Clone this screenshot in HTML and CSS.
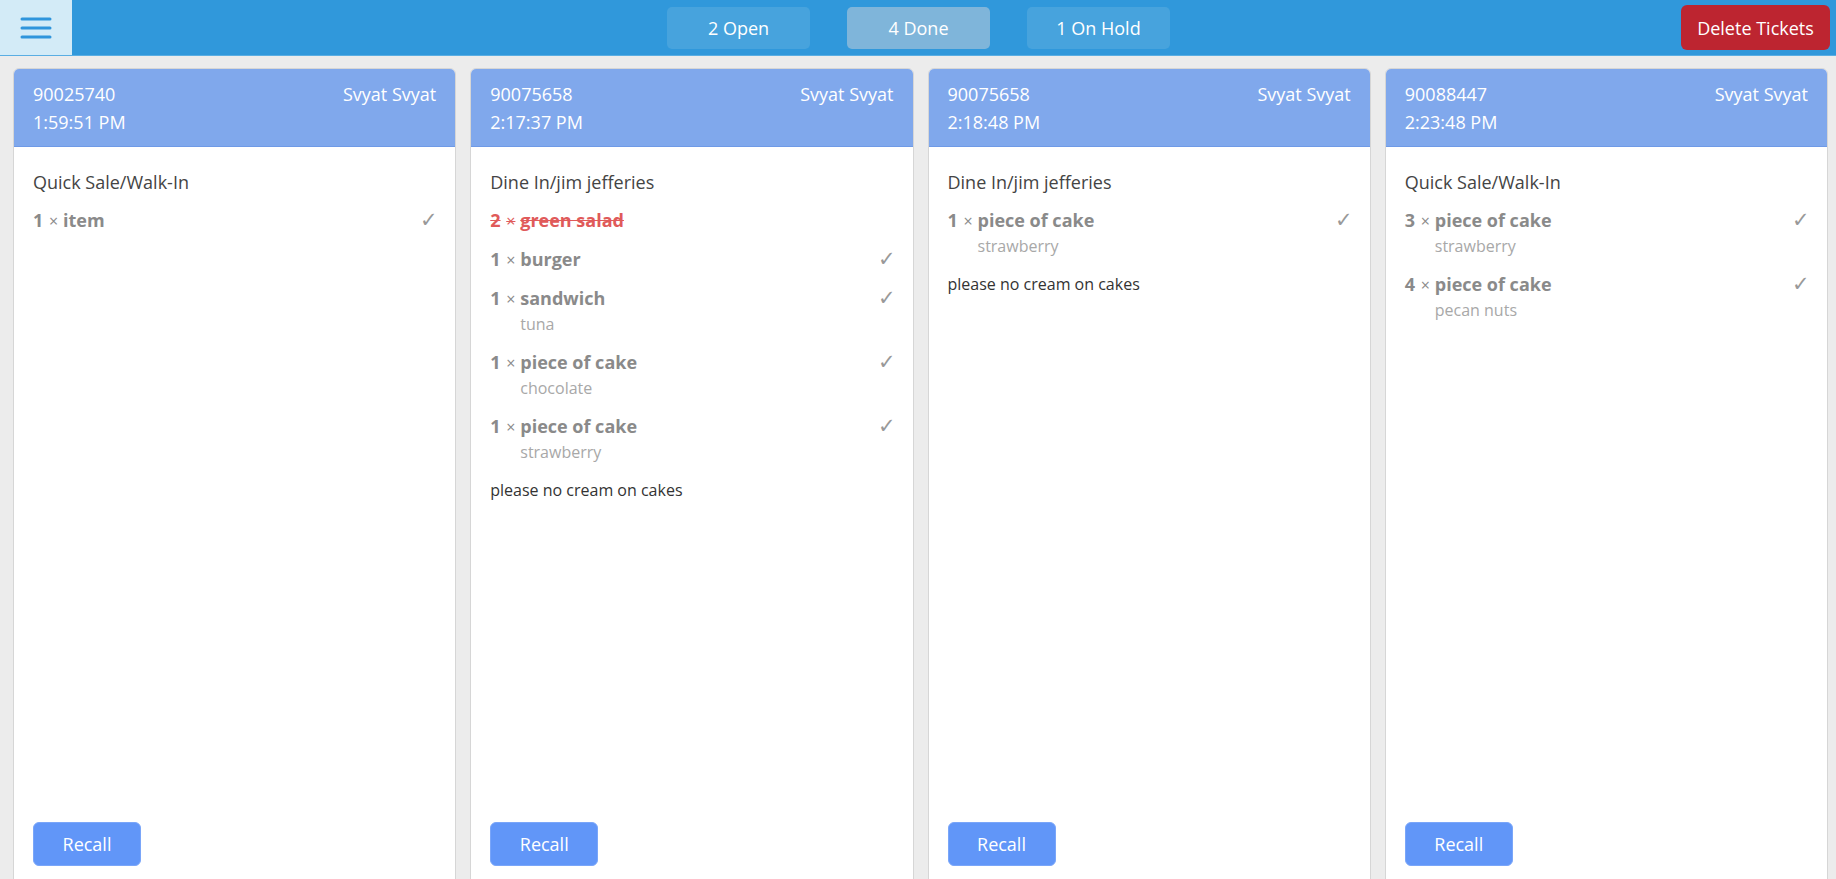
FILE: index.html
```html
<!DOCTYPE html>
<html lang="en">
<head>
    <meta charset="UTF-8">
    <meta name="viewport" content="width=device-width, initial-scale=1.0">
    <title>Kitchen Tickets</title>
    <link rel="stylesheet" href="styles.css">
</head>
<body>

<header class="topbar">
    <button class="menu-btn" aria-label="Menu">
        <svg width="32" height="24" viewBox="0 0 32 24">
            <path d="M2 3h28M2 12h28M2 21h28" stroke="#2f95dc" stroke-width="3" stroke-linecap="round"/>
        </svg>
    </button>
    <nav class="tabs">
        <button class="tab">2 Open</button>
        <button class="tab active">4 Done</button>
        <button class="tab">1 On Hold</button>
    </nav>
    <button class="delete-btn">Delete Tickets</button>
</header>

<section class="tickets">
    <div class="ticket">
        <div class="ticket-head">
            <div class="row"><span>90025740</span><span>Svyat Svyat</span></div>
            <div class="row"><span>1:59:51 PM</span></div>
        </div>
        <div class="ticket-body">
            <div class="order-type">Quick Sale/Walk-In</div>
            <div class="item">
                <div class="item-line"><span class="qty">1</span><span class="times">×</span><span class="name">item</span><span class="check">✓</span></div>
            </div>
        </div>
        <div class="ticket-foot"><button class="recall">Recall</button></div>
    </div>

    <div class="ticket">
        <div class="ticket-head">
            <div class="row"><span>90075658</span><span>Svyat Svyat</span></div>
            <div class="row"><span>2:17:37 PM</span></div>
        </div>
        <div class="ticket-body">
            <div class="order-type">Dine In/jim jefferies</div>
            <div class="item voided">
                <div class="item-line"><span class="qty">2</span><span class="times">×</span><span class="name">green salad</span></div>
            </div>
            <div class="item">
                <div class="item-line"><span class="qty">1</span><span class="times">×</span><span class="name">burger</span><span class="check">✓</span></div>
            </div>
            <div class="item">
                <div class="item-line"><span class="qty">1</span><span class="times">×</span><span class="name">sandwich</span><span class="check">✓</span></div>
                <div class="mod">tuna</div>
            </div>
            <div class="item">
                <div class="item-line"><span class="qty">1</span><span class="times">×</span><span class="name">piece of cake</span><span class="check">✓</span></div>
                <div class="mod">chocolate</div>
            </div>
            <div class="item">
                <div class="item-line"><span class="qty">1</span><span class="times">×</span><span class="name">piece of cake</span><span class="check">✓</span></div>
                <div class="mod">strawberry</div>
            </div>
            <div class="note">please no cream on cakes</div>
        </div>
        <div class="ticket-foot"><button class="recall">Recall</button></div>
    </div>

    <div class="ticket">
        <div class="ticket-head">
            <div class="row"><span>90075658</span><span>Svyat Svyat</span></div>
            <div class="row"><span>2:18:48 PM</span></div>
        </div>
        <div class="ticket-body">
            <div class="order-type">Dine In/jim jefferies</div>
            <div class="item">
                <div class="item-line"><span class="qty">1</span><span class="times">×</span><span class="name">piece of cake</span><span class="check">✓</span></div>
                <div class="mod">strawberry</div>
            </div>
            <div class="note">please no cream on cakes</div>
        </div>
        <div class="ticket-foot"><button class="recall">Recall</button></div>
    </div>

    <div class="ticket">
        <div class="ticket-head">
            <div class="row"><span>90088447</span><span>Svyat Svyat</span></div>
            <div class="row"><span>2:23:48 PM</span></div>
        </div>
        <div class="ticket-body">
            <div class="order-type">Quick Sale/Walk-In</div>
            <div class="item">
                <div class="item-line"><span class="qty">3</span><span class="times">×</span><span class="name">piece of cake</span><span class="check">✓</span></div>
                <div class="mod">strawberry</div>
            </div>
            <div class="item">
                <div class="item-line"><span class="qty">4</span><span class="times">×</span><span class="name">piece of cake</span><span class="check">✓</span></div>
                <div class="mod">pecan nuts</div>
            </div>
        </div>
        <div class="ticket-foot"><button class="recall">Recall</button></div>
    </div>
</section>

</body>
</html>
```

FILE: styles.css
```css
body {
    font-family: "Open Sans", "Noto Sans", sans-serif;
    margin: 0;
    padding: 0;
    background-color: #ececec;
    height: 879px;
    overflow: hidden;
}
button {
    font-family: inherit;
    cursor: pointer;
}
.topbar {
    display: flex;
    align-items: center;
    height: 55px;
    background-color: #3098db;
    border-bottom: 1px solid #5aaee3;
}
.menu-btn {
    width: 72px;
    height: 55px;
    background-color: #d3ebf7;
    border: none;
    display: flex;
    align-items: center;
    justify-content: center;
    padding: 0;
}
.tabs {
    display: flex;
    gap: 37px;
    margin-left: 595px;
}
.tab {
    width: 143px;
    height: 42px;
    border: none;
    border-radius: 5px;
    background-color: #47a3dd;
    color: white;
    font-size: 18px;
}
.tab.active {
    background-color: #7fb5da;
}
.delete-btn {
    margin-left: auto;
    margin-right: 6px;
    width: 149px;
    height: 45px;
    padding: 0;
    border: none;
    border-radius: 6px;
    background-color: #bd2530;
    color: white;
    font-size: 18px;
}
.tickets {
    display: grid;
    grid-template-columns: repeat(4, 1fr);
    gap: 14px;
    padding: 12px 8px 0 13px;
}
.ticket {
    height: 830px;
    display: flex;
    flex-direction: column;
    background-color: white;
    border: 1px solid #d6d6d6;
    border-radius: 6px;
    overflow: hidden;
}
.ticket-head {
    background-color: #80a8ec;
    color: white;
    padding: 11px 19px 10px 19px;
    font-size: 18px;
    line-height: 28px;
    border-bottom: 1px solid #6f9ae6;
}
.ticket-head .row {
    display: flex;
    justify-content: space-between;
}
.ticket-body {
    flex: 1;
    padding: 22px 19px 0 19px;
}
.order-type {
    font-size: 18px;
    color: #444;
    line-height: 26px;
    margin-bottom: 12px;
}
.item {
    margin-bottom: 12px;
    color: #8a8a8a;
}
.item-line {
    display: flex;
    align-items: baseline;
    font-size: 18px;
    font-weight: bold;
    line-height: 26px;
}
.qty {
    width: 16px;
}
.times {
    font-weight: normal;
    font-size: 16px;
    width: 14px;
}
.name {
    flex: 1;
}
.check {
    font-weight: normal;
    font-size: 21px;
    line-height: 18px;
    color: #999;
    margin-right: -2px;
}
.item.voided {
    color: #e05a5a;
}
.item.voided .item-line {
    text-decoration: line-through;
}
.mod {
    padding-left: 30px;
    font-size: 16px;
    color: #a8a8a8;
    line-height: 25px;
}
.note {
    font-size: 16px;
    color: #333;
    line-height: 26px;
}
.ticket-foot {
    padding: 0 19px 33px 19px;
}
.recall {
    width: 108px;
    height: 44px;
    border: 1px solid #7aa6f9;
    border-radius: 6px;
    background-color: #6196f8;
    color: white;
    font-size: 18px;
}
```
